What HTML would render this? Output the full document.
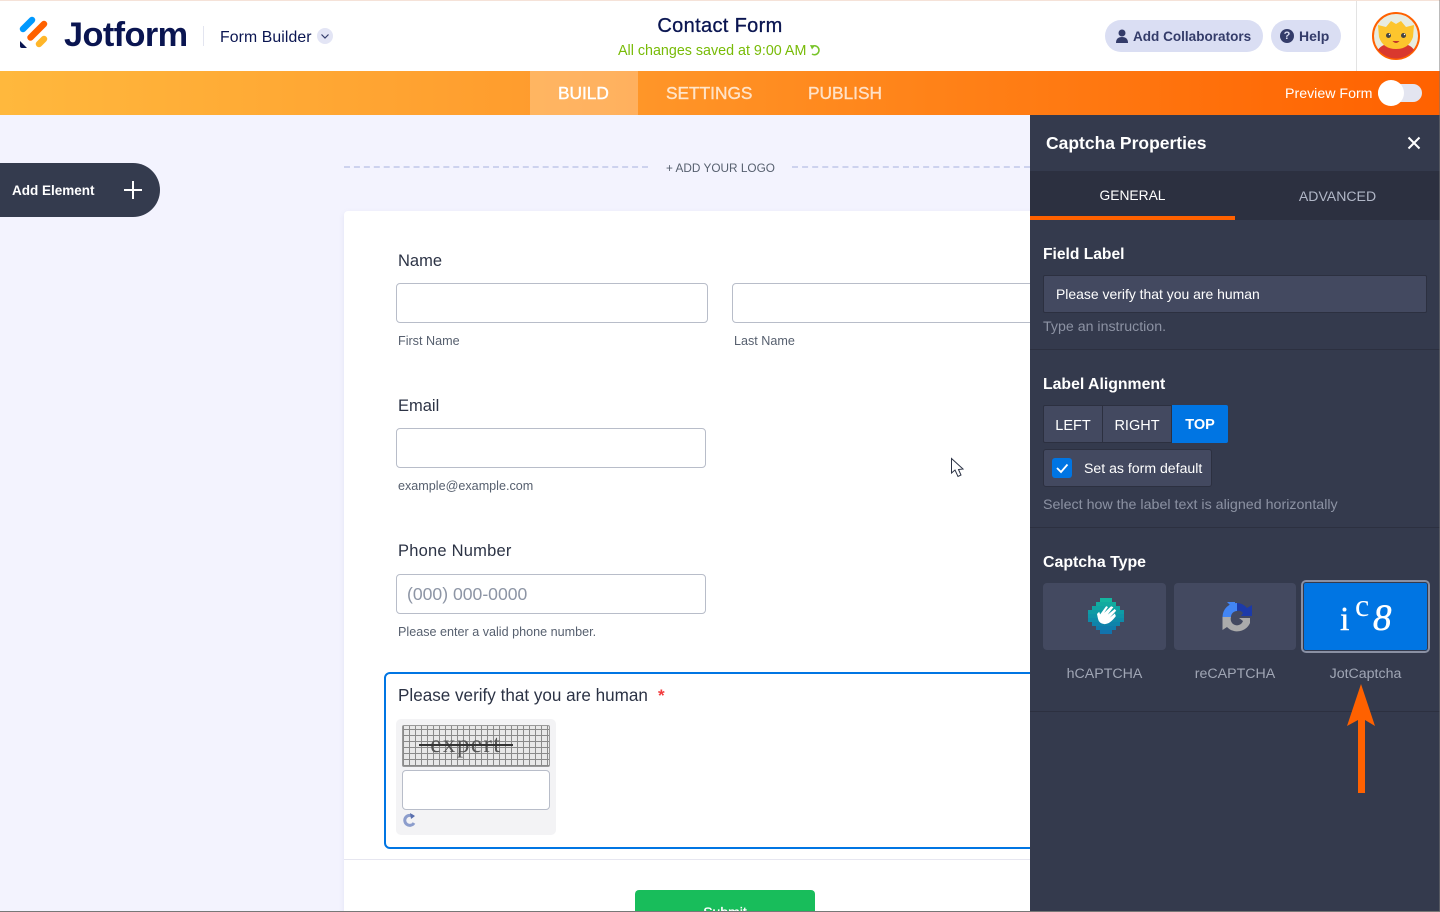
<!DOCTYPE html>
<html><head><meta charset="utf-8"><style>
*{box-sizing:border-box;margin:0;padding:0}
html,body{width:1440px;height:912px;overflow:hidden;background:#f3f3fe;font-family:"Liberation Sans",sans-serif}
#p{position:relative;width:1440px;height:912px;overflow:hidden;background:#f3f3fe}
.a{position:absolute;white-space:nowrap}
.in{position:absolute;background:#fff;border:1px solid #b8bdc9;border-radius:4px}
.lab{position:absolute;font-size:16.5px;color:#2c3345;white-space:nowrap;left:398px}
.sub{position:absolute;font-size:12.6px;color:#57606f;white-space:nowrap}
.w{color:#fff;font-weight:bold}
</style></head><body><div id="p">
<div class="a" style="left:0;top:0;width:1440px;height:71px;background:#fff"></div>
<div class="a" style="left:0;top:0;width:1440px;height:1px;background:#f5e2d8"></div>
<svg class="a" style="left:19px;top:16px" width="32" height="34" viewBox="0 0 32 34">
<path d="M4 13 L13 4" stroke="#0099ff" stroke-width="6.500" stroke-linecap="round"/>
<path d="M11.500 21.500 L25 8" stroke="#ff6100" stroke-width="6.500" stroke-linecap="round"/>
<path d="M20 28 L25 23" stroke="#ffb629" stroke-width="6.500" stroke-linecap="round"/>
<path d="M1 25 L8 32 L3 32 Q1 32 1 30 Z" fill="#0a1551"/></svg>
<div class="a" style="left:64px;top:15px;font-size:34.300px;font-weight:bold;color:#0a1551;letter-spacing:-.6px;line-height:40px">Jotform</div>
<div class="a" style="left:203px;top:26px;width:1px;height:20px;background:#e3e5f0"></div>
<div class="a" style="left:220px;top:28px;font-size:15.800px;color:#0a1551;line-height:19px;letter-spacing:.1px">Form Builder</div>
<svg class="a" style="left:317px;top:28px" width="16" height="16"><circle cx="8" cy="8" r="8" fill="#e3e5f5"/><path d="M4.500 6.500 L8 10 L11.500 6.500" stroke="#343c6a" stroke-width="1.200" fill="none"/></svg>
<div class="a" style="left:520px;width:400px;top:14px;text-align:center;font-size:20px;color:#0a1551;line-height:24px;letter-spacing:.35px;-webkit-text-stroke:.3px #0a1551">Contact Form</div>
<div class="a" style="left:618px;top:43px;font-size:14.300px;color:#78bb07;line-height:17px">All changes saved at 9:00 AM</div>
<svg class="a" style="left:809px;top:44px" width="13" height="13" viewBox="0 0 13 13"><path d="M3 2.500 A4.500 4.500 0 1 1 3 10" stroke="#78c42a" stroke-width="1.600" fill="none"/><path d="M1 1 L6 1.500 L3 5.500 Z" fill="#78c42a"/></svg>
<div class="a" style="left:1105px;top:20px;width:158px;height:32px;border-radius:16px;background:#dadef3"></div>
<svg class="a" style="left:1115px;top:29px" width="14" height="14" viewBox="0 0 14 14"><circle cx="7" cy="4" r="3.500" fill="#343c6a"/><path d="M1 14 Q1 8 7 8 Q13 8 13 14 Z" fill="#343c6a"/></svg>
<div class="a" style="left:1133px;top:28px;font-size:13.550px;font-weight:bold;color:#343c6a;line-height:18px">Add Collaborators</div>
<div class="a" style="left:1271px;top:20px;width:70px;height:32px;border-radius:16px;background:#dadef3"></div>
<div class="a" style="left:1280px;top:29px;width:14px;height:14px;border-radius:50%;background:#343c6a;color:#dadef3;font-size:11px;font-weight:bold;text-align:center;line-height:14px">?</div>
<div class="a" style="left:1299px;top:27px;font-size:14px;font-weight:bold;color:#343c6a;line-height:18px">Help</div>
<div class="a" style="left:1356px;top:1px;width:1px;height:70px;background:#e3e3e3"></div>
<svg class="a" style="left:1372px;top:12px" width="48" height="48" viewBox="0 0 48 48">
<circle cx="24" cy="24" r="23" fill="#e8ece0" stroke="#ff6100" stroke-width="2"/>
<path d="M6 38 Q10 31 24 31 Q38 31 42 38 Q34 46.500 24 46.500 Q14 46.500 6 38Z" fill="#d9382e"/>
<path d="M6 13 L14 15 L19 9 L24 12 L29 9 L34 15 L42 13 L41 25 Q37 37 24 37 Q11 37 7 25Z" fill="#fdc52d"/>
<circle cx="16.500" cy="23.500" r="2.500" fill="#444"/><circle cx="31.500" cy="23.500" r="2.500" fill="#444"/>
<circle cx="17.500" cy="22.500" r=".7" fill="#fff"/><circle cx="32.500" cy="22.500" r=".7" fill="#fff"/>
<path d="M20.500 29 Q24 33 27.500 29Z" fill="#c0392b"/></svg>
<div class="a" style="left:0;top:71px;width:1440px;height:44px;background:linear-gradient(90deg,#ffb83d 0%,#ff9a2c 40%,#ff8218 65%,#ff6100 100%)"></div>
<div class="a" style="left:530px;top:71px;width:108px;height:44px;background:rgba(255,255,255,.25)"></div>
<div class="a" style="left:558px;top:82px;font-size:17.300px;color:#fff;line-height:22px;-webkit-text-stroke:.4px #fff">BUILD</div>
<div class="a" style="left:666px;top:82px;font-size:17.300px;color:rgba(255,255,255,.72);line-height:22px;-webkit-text-stroke:.4px rgba(255,255,255,.6)">SETTINGS</div>
<div class="a" style="left:808px;top:82px;font-size:17.300px;color:rgba(255,255,255,.72);line-height:22px;-webkit-text-stroke:.4px rgba(255,255,255,.6)">PUBLISH</div>
<div class="a" style="left:1285px;top:85px;font-size:14.200px;color:#fff;line-height:18px">Preview Form</div>
<div class="a" style="left:1378px;top:84px;width:44px;height:18px;border-radius:9px;background:#e3e5f0"></div>
<div class="a" style="left:1378px;top:80px;width:26px;height:26px;border-radius:50%;background:#fff"></div>

<div class="a" style="left:0;top:163px;width:160px;height:54px;background:#343b4e;border-radius:0 27px 27px 0"></div>
<div class="a w" style="left:12px;top:182px;font-size:13.500px;line-height:18px">Add Element</div>
<div class="a" style="left:124px;top:189px;width:18px;height:2px;background:#fff"></div>
<div class="a" style="left:132px;top:181px;width:2px;height:18px;background:#fff"></div>

<div class="a" style="left:344px;top:166px;width:304px;height:0;border-top:2px dashed #cdd2ee"></div>
<div class="a" style="left:792px;top:166px;width:238px;height:0;border-top:2px dashed #cdd2ee"></div>
<div class="a" style="left:666px;top:160px;font-size:11.800px;color:#57606f;line-height:16px">+ ADD YOUR LOGO</div>

<div class="a" style="left:344px;top:211px;width:700px;height:701px;background:#fff;border-radius:4px 0 0 0;box-shadow:0 2px 6px rgba(80,90,160,.1)"></div>
<div class="lab" style="top:252px">Name</div>
<div class="in" style="left:396px;top:283px;width:312px;height:40px"></div>
<div class="in" style="left:732px;top:283px;width:310px;height:40px"></div>
<div class="sub" style="left:398px;top:334px">First Name</div>
<div class="sub" style="left:734px;top:334px">Last Name</div>
<div class="lab" style="top:397px">Email</div>
<div class="in" style="left:396px;top:428px;width:310px;height:40px"></div>
<div class="sub" style="left:398px;top:479px">example@example.com</div>
<div class="lab" style="top:542px;letter-spacing:.22px">Phone Number</div>
<div class="in" style="left:396px;top:574px;width:310px;height:40px"></div>
<div class="a" style="left:407px;top:585px;font-size:17.600px;color:#8d95a5;line-height:19px">(000) 000-0000</div>
<div class="sub" style="left:398px;top:625px">Please enter a valid phone number.</div>

<svg class="a" style="left:950px;top:457px" width="15" height="22" viewBox="0 0 15 22"><path d="M1.500 1.500 L1.500 16 L5 13 L8 19.500 L11 18 L8.500 12.500 L13 12 Z" fill="#fff" stroke="#2c3345" stroke-width="1"/></svg>

<div class="a" style="left:384px;top:672px;width:660px;height:177px;border:2px solid #0075e3;border-radius:6px 0 0 6px"></div>
<div class="lab" style="top:686px;font-size:17.100px">Please verify that you are human</div>
<div class="a" style="left:658px;top:686px;font-size:17px;font-weight:bold;color:#f23a3c">*</div>
<div class="a" style="left:396px;top:719px;width:160px;height:116px;background:#f3f3f5;border-radius:5px"></div>
<div class="a" style="left:402px;top:725px;width:148px;height:42px;border:1px solid #999;border-radius:2px;background-color:#e8e8e8;background-image:repeating-linear-gradient(90deg,#8a8a8a 0 1px,transparent 1px 6px),repeating-linear-gradient(0deg,#8a8a8a 0 1px,transparent 1px 6px)"></div>
<div class="a" style="left:392px;top:733px;width:148px;text-align:center;font-family:'Liberation Serif',serif;font-size:25px;color:#555;line-height:24px;letter-spacing:1.500px">expert</div>
<div class="a" style="left:419px;top:744px;width:94px;height:1.500px;background:#333"></div>
<div class="in" style="left:402px;top:770px;width:148px;height:40px"></div>
<svg class="a" style="left:403px;top:813px" width="14" height="14" viewBox="0 0 14 14"><path d="M10.500 4 A5 5 0 1 0 11 10" stroke="#8c9dcc" stroke-width="3" fill="none"/><path d="M7 0 L12 3 L8 6Z" fill="#5a6fae"/></svg>
<div class="a" style="left:344px;top:859px;width:700px;height:1px;background:#e6e6f0"></div>
<div class="a" style="left:635px;top:890px;width:180px;height:30px;background:#18bd5b;border-radius:4px 4px 0 0"></div>
<div class="a" style="left:635px;top:904px;width:180px;text-align:center;color:#fff;font-size:14px;line-height:16px;-webkit-text-stroke:.3px #fff">Submit</div>

<div class="a" style="left:1030px;top:115px;width:410px;height:797px;background:#343a4d"></div>
<div class="a w" style="left:1046px;top:132px;font-size:17.500px;line-height:22px">Captcha Properties</div>
<svg class="a" style="left:1407px;top:136px" width="14" height="14"><path d="M1.500 1.500 L12.500 12.500 M12.500 1.500 L1.500 12.500" stroke="#fff" stroke-width="2"/></svg>
<div class="a" style="left:1030px;top:171px;width:410px;height:49px;background:#2c3040"></div>
<div class="a" style="left:1030px;top:216px;width:205px;height:4px;background:#ff6100"></div>
<div class="a" style="left:1030px;top:187px;width:205px;text-align:center;font-size:13.800px;color:#fff;line-height:18px">GENERAL</div>
<div class="a" style="left:1235px;top:187px;width:205px;text-align:center;font-size:14.100px;color:#b1b7c7;line-height:18px">ADVANCED</div>
<div class="a w" style="left:1043px;top:245px;font-size:15.600px;line-height:19px">Field Label</div>
<div class="a" style="left:1043px;top:275px;width:384px;height:38px;background:#434960;border:1px solid #2c3040;border-radius:2px"></div>
<div class="a" style="left:1056px;top:285px;font-size:13.950px;color:#fff;line-height:18px">Please verify that you are human</div>
<div class="a" style="left:1043px;top:318px;font-size:14.200px;color:#8c92a3;line-height:18px">Type an instruction.</div>
<div class="a" style="left:1030px;top:349px;width:410px;height:1px;background:#2c3040"></div>
<div class="a w" style="left:1043px;top:375px;font-size:15.800px;line-height:19px">Label Alignment</div>
<div class="a" style="left:1043px;top:405px;width:60px;height:38px;background:#434960;border:1px solid #2c3040;border-radius:2px 0 0 2px;color:#fff;font-size:14.500px;text-align:center;line-height:38px;padding-top:1px">LEFT</div>
<div class="a" style="left:1102px;top:405px;width:70px;height:38px;background:#434960;border:1px solid #2c3040;color:#fff;font-size:14.500px;text-align:center;line-height:38px;padding-top:1px">RIGHT</div>
<div class="a w" style="left:1172px;top:405px;width:56px;height:38px;background:#0075e3;border-radius:0 2px 2px 0;font-size:14.500px;text-align:center;line-height:41px">TOP</div>
<div class="a" style="left:1043px;top:449px;width:169px;height:38px;background:#434960;border:1px solid #2c3040;border-radius:3px"></div>
<div class="a" style="left:1052px;top:458px;width:20px;height:20px;background:#0075e3;border-radius:3px"></div>
<svg class="a" style="left:1052px;top:458px" width="20" height="20"><path d="M5 10 L9 14 L15.500 6.500" stroke="#fff" stroke-width="1.800" fill="none"/></svg>
<div class="a" style="left:1084px;top:459px;font-size:14.100px;color:#fff;line-height:18px">Set as form default</div>
<div class="a" style="left:1043px;top:496px;font-size:14.250px;color:#8c92a3;line-height:18px">Select how the label text is aligned horizontally</div>
<div class="a" style="left:1030px;top:527px;width:410px;height:1px;background:#2c3040"></div>
<div class="a w" style="left:1043px;top:553px;font-size:15.900px;line-height:19px">Captcha Type</div>
<div class="a" style="left:1043px;top:583px;width:123px;height:67px;background:#434960;border-radius:4px"></div>
<div class="a" style="left:1174px;top:583px;width:122px;height:67px;background:#434960;border-radius:4px"></div>
<div class="a" style="left:1301px;top:580px;width:129px;height:73px;background:#0075e3;border:2px solid #8a90a3;outline:1px solid #343a4d;outline-offset:-3px;border-radius:5px"></div>
<svg class="a" style="left:1088px;top:598px" width="36" height="36" viewBox="0 0 36 36">
<rect x="12" y="0" width="12" height="4" fill="#14b5a0"/>
<rect x="8" y="4" width="20" height="4" fill="#12ab9f"/>
<rect x="4" y="8" width="28" height="4" fill="#10a3a2"/>
<rect x="0" y="12" width="36" height="4" fill="#0f9ba5"/>
<rect x="0" y="16" width="36" height="4" fill="#0e93a7"/>
<rect x="0" y="20" width="36" height="4" fill="#0e8ba9"/>
<rect x="4" y="24" width="28" height="4" fill="#0f83aa"/>
<rect x="8" y="28" width="20" height="4" fill="#107bab"/>
<rect x="12" y="32" width="12" height="4" fill="#1273ad"/>
<g transform="rotate(25 18 18)"><path d="M9 20 L12 24 Q15 28 20 26 Q25 24 27 14 L25 12 L22 18 L25 9 L23 8 L19 16 L21 7 L18.500 7 L15 16 L16 9 L14 9 L12 19 L10 17Z" fill="#fff"/></g></svg>
<svg class="a" style="left:1221px;top:601px" width="32" height="32" viewBox="0 0 32 32"><path d="M1.500 16 A14 14 0 0 1 16 2 L16 10 A6 6 0 0 0 10 16Z" fill="#4285f4"/><path d="M6 1 L14 1 L14 9 Z" fill="#4285f4"/><path d="M16 2 A14 14 0 0 1 26 7 L31 4 L31 15 L20 15 L22 12 A6 6 0 0 0 16 10Z" fill="#1c3aa9"/><path d="M1.500 16 L10 16 A6 6 0 0 0 22 20 L18 17 L29 17 L29 22 A14 14 0 0 1 6 26 L1.500 29Z" fill="#ababab"/></svg>
<div class="a" style="left:1340px;top:603px;font-family:'Liberation Serif',serif;font-size:34px;color:#fff;line-height:34px;-webkit-text-stroke:.4px #fff">i</div>
<div class="a" style="left:1355px;top:590px;font-family:'Liberation Serif',serif;font-size:32px;color:#fff;line-height:30px">c</div>
<div class="a" style="left:1373px;top:601px;font-family:'Liberation Serif',serif;font-style:italic;font-size:37px;color:#fff;line-height:36px;-webkit-text-stroke:.5px #fff">8</div>
<div class="a" style="left:1043px;top:665px;width:123px;text-align:center;font-size:14.200px;color:#a0a6b5;line-height:18px">hCAPTCHA</div>
<div class="a" style="left:1174px;top:665px;width:122px;text-align:center;font-size:14.200px;color:#a0a6b5;line-height:18px">reCAPTCHA</div>
<div class="a" style="left:1303px;top:665px;width:125px;text-align:center;font-size:14.200px;color:#a0a6b5;line-height:18px">JotCaptcha</div>
<div class="a" style="left:1030px;top:711px;width:410px;height:1px;background:#2c3040"></div>
<svg class="a" style="left:1345px;top:683px" width="32" height="112" viewBox="0 0 32 112"><path d="M16 1 L30 43 L20 37 L20 110 L13 110 L13 37 L2 43 Z" fill="#ff6100"/></svg>
<div class="a" style="left:0;top:911px;width:1440px;height:1px;background:#777"></div>
<div class="a" style="left:1439px;top:0;width:1px;height:912px;background:#777;opacity:.5"></div>
</div></body></html>
